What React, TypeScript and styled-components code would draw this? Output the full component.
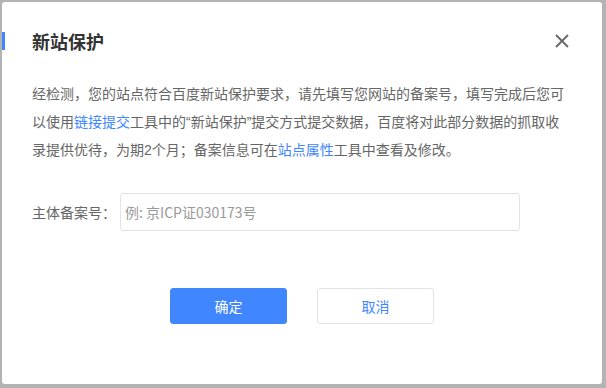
import styled, { createGlobalStyle } from 'styled-components';

const GlobalStyle = createGlobalStyle`
  html, body {
    margin: 0;
    padding: 0;
    background: #b3b3b3;
  }
  body {
    font-family: "Noto Sans CJK SC", "Noto Sans", sans-serif;
  }
`;

export default function App() {
  return (
    <>
      <GlobalStyle />
      <Backdrop>
        <Dialog>
          <Header>
            <Title>新站保护</Title>
            <CloseButton aria-label='关闭'>
              <svg width='14' height='14' viewBox='0 0 14 14'>
                <path d='M1 1L13 13M13 1L1 13' stroke='#666' strokeWidth='1.8' />
              </svg>
            </CloseButton>
          </Header>
          <Body>
            <Notice>
              经检测，您的站点符合百度新站保护要求，请先填写您网站的备案号，填写完成后您可以使用
              <Link>链接提交</Link>工具中的<Latin>“</Latin>新站保护<Latin>”</Latin>
              提交方式提交数据，百度将对此部分数据的抓取收录提供优待，为期<Latin>2</Latin>个月；备案信息可在
              <Link>站点属性</Link>工具中查看及修改。
            </Notice>
            <FormRow>
              <Label>主体备案号：</Label>
              <Input placeholder='例: 京ICP证030173号' />
            </FormRow>
          </Body>
          <Footer>
            <Button $primary>确定</Button>
            <Button>取消</Button>
          </Footer>
        </Dialog>
      </Backdrop>
    </>
  );
}

const Backdrop = styled.div`
  width: 606px;
  height: 388px;
  padding: 2px 0 0 2px;
  box-sizing: border-box;
  background: #b3b3b3;
`;

const Dialog = styled.div`
  width: 600px;
  height: 382px;
  background: #fff;
  border-radius: 3px;
  display: flex;
  flex-direction: column;
  box-sizing: border-box;
`;

const Header = styled.div`
  display: flex;
  align-items: center;
  justify-content: space-between;
  padding: 27px 32px 0 30px;
  height: 24px;
  box-sizing: content-box;
`;

const Title = styled.h2`
  position: relative;
  margin: 0;
  font-size: 18px;
  line-height: 24px;
  font-weight: 700;
  color: #333;

  &::before {
    content: '';
    position: absolute;
    left: -30px;
    top: 3px;
    width: 3px;
    height: 18px;
    background: #3f87ff;
  }
`;

const CloseButton = styled.button`
  display: flex;
  align-items: center;
  justify-content: center;
  width: 20px;
  height: 20px;
  padding: 0;
  margin-right: -2px;
  border: none;
  background: transparent;
  cursor: pointer;
`;

const Body = styled.div`
  padding: 27px 32px 0 30px;
`;

const Notice = styled.p`
  margin: 0;
  width: 536px;
  font-size: 14px;
  line-height: 27.5px;
  color: #666;
`;

const Latin = styled.span`
  font-family: "Liberation Sans", "Noto Sans CJK SC", sans-serif;
`;

const Link = styled.a`
  color: #3f87ff;
  text-decoration: none;
  cursor: pointer;
`;

const FormRow = styled.div`
  display: flex;
  align-items: center;
  margin-top: 28px;
`;

const Label = styled.label`
  width: 88px;
  font-size: 14px;
  color: #666;
`;

const Input = styled.input`
  width: 400px;
  height: 38px;
  box-sizing: border-box;
  padding: 0 4px;
  border: 1px solid #e3e3e3;
  border-radius: 3px;
  font-family: "Noto Sans CJK SC", "Noto Sans", sans-serif;
  font-size: 14px;
  color: #333;
  outline: none;

  &::placeholder {
    color: #999;
  }
`;

const Footer = styled.div`
  display: flex;
  justify-content: center;
  gap: 30px;
  margin-top: 57px;
`;

const Button = styled.button<{ $primary?: boolean }>`
  width: 117px;
  height: 36px;
  border-radius: 3px;
  border: 1px solid ${(p) => (p.$primary ? '#4086ff' : '#e3e3e3')};
  background: ${(p) => (p.$primary ? '#4086ff' : '#fff')};
  color: ${(p) => (p.$primary ? '#fff' : '#3f87ff')};
  font-family: "Noto Sans CJK SC", "Noto Sans", sans-serif;
  font-size: 14px;
  cursor: pointer;
`;
